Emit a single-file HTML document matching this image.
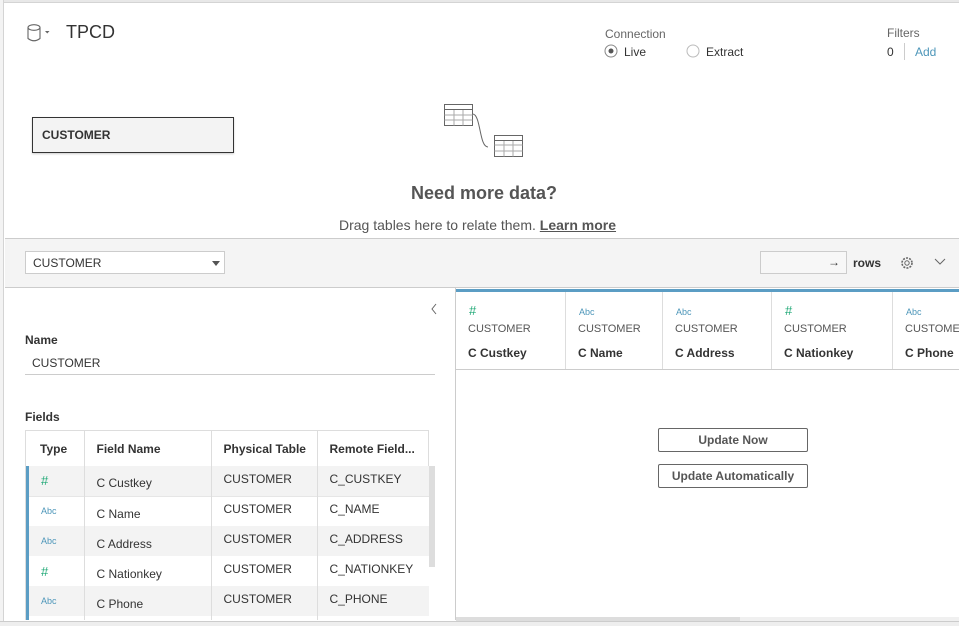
<!DOCTYPE html>
<html><head><meta charset="utf-8"><style>
*{margin:0;padding:0;box-sizing:border-box}
body{width:959px;height:626px;overflow:hidden;background:#fff;font-family:"Liberation Sans",sans-serif;color:#333;position:relative}
.a{position:absolute}
.t{font-size:12px}
.hash{color:#1fa876;font-size:13px}
.abc{color:#4d96b9;font-size:9px}
</style></head><body>
<div class="a" style="left:0;top:0;width:959px;height:3px;background:#e8e8e8;border-bottom:1px solid #d4d4d4"></div>
<div class="a" style="left:0;top:0;width:4px;height:626px;background:#f3f3f3;border-right:1px solid #d4d4d4"></div>

<svg class="a" style="left:26px;top:23px" width="28" height="20"><ellipse cx="8" cy="4.5" rx="6" ry="2.8" fill="none" stroke="#666" stroke-width="1.1"/><path d="M2 4.5V15.5Q8 20 14 15.5V4.5" fill="none" stroke="#666" stroke-width="1.1"/><path d="M19 8h4.5l-2.25 2.5z" fill="#666"/></svg>
<div class="a" style="left:66px;top:22px;font-size:18px;color:#333">TPCD</div>

<div class="a t" style="left:605px;top:27px;color:#666">Connection</div>
<svg class="a" style="left:604px;top:44px" width="14" height="14"><circle cx="7" cy="7" r="6" fill="#fff" stroke="#888"/><circle cx="7" cy="7" r="2.5" fill="#555"/></svg>
<div class="a t" style="left:624px;top:45px;color:#333">Live</div>
<svg class="a" style="left:686px;top:44px" width="14" height="14"><circle cx="7" cy="7" r="6" fill="#fff" stroke="#bbb"/></svg>
<div class="a t" style="left:706px;top:45px;color:#333">Extract</div>
<div class="a t" style="left:887px;top:26px;color:#666">Filters</div>
<div class="a t" style="left:887px;top:45px">0</div>
<div class="a" style="left:904px;top:43px;width:1px;height:17px;background:#ccc"></div>
<div class="a t" style="left:915px;top:45px;color:#4d96b9">Add</div>

<div class="a" style="left:32px;top:117px;width:202px;height:36px;background:#f3f3f3;border:1px solid #333;box-shadow:0 1px 2px rgba(0,0,0,.2);font-size:12px;font-weight:bold;padding:10px 9px">CUSTOMER</div>

<svg class="a" style="left:441px;top:102px" width="84" height="58" fill="none" stroke="#666"><rect x="3.5" y="2.5" width="28" height="21"/><path d="M3.5 7.5h28M3.5 13h28M3.5 18h28M13 7.5v16M22 7.5v16" stroke="#aaa"/><path d="M3.5 7.5h28" stroke="#666"/><path d="M31.5 12C40 12 38 45 47 45"/><rect x="53.5" y="33.5" width="28" height="21"/><path d="M53.5 43h28M53.5 49h28M63 38.5v16M72 38.5v16" stroke="#aaa"/><path d="M53.5 38.5h28"/></svg>
<div class="a" style="left:411px;top:183px;font-size:18px;font-weight:bold;color:#555">Need more data?</div>
<div class="a" style="left:339px;top:217px;font-size:14px;color:#555">Drag tables here to relate them. <b style="text-decoration:underline">Learn more</b></div>

<div class="a" style="left:5px;top:238px;width:954px;height:50px;background:#f4f4f4;border-top:1px solid #ccc;border-bottom:1px solid #ccc"></div>
<div class="a t" style="left:25px;top:251px;width:200px;height:23px;background:#fff;border:1px solid #ccc;padding:4px 7px">CUSTOMER</div>
<div class="a" style="left:212px;top:261px;border:4px solid transparent;border-top:5px solid #555;border-bottom:0"></div>
<div class="a" style="left:760px;top:251px;width:87px;height:23px;background:#f7f7f7;border:1px solid #ccc;text-align:right;padding:3px 6px;font-size:12px">→</div>
<div class="a t" style="left:853px;top:256px;font-weight:bold">rows</div>
<svg class="a" style="left:900px;top:256px" width="14" height="14" fill="none" stroke="#666"><circle cx="7" cy="7" r="2.2"/><circle cx="7" cy="7" r="5" stroke-dasharray="2 1.2" stroke-width="1.6"/></svg>
<svg class="a" style="left:934px;top:258px" width="12" height="8"><path d="M1 1l5 5 5-5" fill="none" stroke="#666"/></svg>

<div class="a" style="left:455px;top:288px;width:1px;height:332px;background:#ccc"></div>
<svg class="a" style="left:430px;top:303px" width="8" height="12"><path d="M6 1L2 6l4 5" fill="none" stroke="#666"/></svg>
<div class="a t" style="left:25px;top:333px;font-weight:bold">Name</div>
<div class="a t" style="left:32px;top:356px">CUSTOMER</div>
<div class="a" style="left:25px;top:374px;width:410px;height:1px;background:#ccc"></div>
<div class="a t" style="left:25px;top:410px;font-weight:bold">Fields</div>

<div class="a" style="left:25px;top:430px;width:404px;height:190px;border:1px solid #ddd;border-bottom:0;overflow:hidden">
<table style="border-collapse:collapse;font-size:12px;width:403px">
<colgroup><col style="width:58px"><col style="width:127px"><col style="width:106px"><col></colgroup>
<tr style="height:36px;font-weight:bold;background:#fff"><td style="padding-left:14px;border-right:1px solid #ddd">Type</td><td style="padding-left:12px;border-right:1px solid #ddd">Field Name</td><td style="padding-left:12px;border-right:1px solid #ddd">Physical Table</td><td style="padding-left:12px">Remote Field...</td></tr>
</table>
</div>
<div class="a" style="left:26px;top:466px;width:403px;height:154px;border-left:3px solid #5b9dc4;overflow:hidden">
<table style="border-collapse:collapse;font-size:12px;width:400px">
<colgroup><col style="width:55px"><col style="width:127px"><col style="width:106px"><col></colgroup>
<tr style="height:30px;background:#f3f3f3"><td style="padding-left:12px" class="hash">#</td><td style="padding:5px 12px 0;border-left:1px solid #ddd">C Custkey</td><td style="padding:0 12px 4px;border-left:1px solid #ddd">CUSTOMER</td><td style="padding:0 12px 4px;border-left:1px solid #ddd">C_CUSTKEY</td></tr>
<tr style="height:30px;background:#fff;border-top:1px solid #e6e6e6"><td style="padding-left:12px" class="abc">Abc</td><td style="padding:5px 12px 0;border-left:1px solid #ddd">C Name</td><td style="padding:0 12px 4px;border-left:1px solid #ddd">CUSTOMER</td><td style="padding:0 12px 4px;border-left:1px solid #ddd">C_NAME</td></tr>
<tr style="height:30px;background:#f3f3f3"><td style="padding-left:12px" class="abc">Abc</td><td style="padding:5px 12px 0;border-left:1px solid #ddd">C Address</td><td style="padding:0 12px 4px;border-left:1px solid #ddd">CUSTOMER</td><td style="padding:0 12px 4px;border-left:1px solid #ddd">C_ADDRESS</td></tr>
<tr style="height:30px;background:#fff"><td style="padding-left:12px" class="hash">#</td><td style="padding:5px 12px 0;border-left:1px solid #ddd">C Nationkey</td><td style="padding:0 12px 4px;border-left:1px solid #ddd">CUSTOMER</td><td style="padding:0 12px 4px;border-left:1px solid #ddd">C_NATIONKEY</td></tr>
<tr style="height:30px;background:#f3f3f3"><td style="padding-left:12px" class="abc">Abc</td><td style="padding:5px 12px 0;border-left:1px solid #ddd">C Phone</td><td style="padding:0 12px 4px;border-left:1px solid #ddd">CUSTOMER</td><td style="padding:0 12px 4px;border-left:1px solid #ddd">C_PHONE</td></tr>
<tr style="height:30px;background:#fff"><td></td><td style="border-left:1px solid #ddd"></td><td style="border-left:1px solid #ddd"></td><td style="border-left:1px solid #ddd"></td></tr>
</table>
</div>
<div class="a" style="left:429px;top:466px;width:6px;height:101px;background:#ddd"></div>

<div class="a" style="left:456px;top:289px;width:503px;height:3px;background:#5b9dc4"></div>
<div class="a" style="left:456px;top:369px;width:503px;height:1px;background:#ccc"></div>
<div class="a" style="left:565px;top:292px;width:1px;height:77px;background:#ddd"></div>
<div class="a" style="left:662px;top:292px;width:1px;height:77px;background:#ddd"></div>
<div class="a" style="left:771px;top:292px;width:1px;height:77px;background:#ddd"></div>
<div class="a" style="left:892px;top:292px;width:1px;height:77px;background:#ddd"></div>

<div class="a hash" style="left:469px;top:303px">#</div><div class="a" style="left:468px;top:323px;font-size:11px;color:#555">CUSTOMER</div><div class="a t" style="left:468px;top:346px;font-weight:bold">C Custkey</div>
<div class="a abc" style="left:579px;top:307px">Abc</div><div class="a" style="left:578px;top:323px;font-size:11px;color:#555">CUSTOMER</div><div class="a t" style="left:578px;top:346px;font-weight:bold">C Name</div>
<div class="a abc" style="left:676px;top:307px">Abc</div><div class="a" style="left:675px;top:323px;font-size:11px;color:#555">CUSTOMER</div><div class="a t" style="left:675px;top:346px;font-weight:bold">C Address</div>
<div class="a hash" style="left:785px;top:303px">#</div><div class="a" style="left:784px;top:323px;font-size:11px;color:#555">CUSTOMER</div><div class="a t" style="left:784px;top:346px;font-weight:bold">C Nationkey</div>
<div class="a abc" style="left:906px;top:307px">Abc</div><div class="a" style="left:905px;top:323px;font-size:11px;color:#555;white-space:nowrap">CUSTOMER</div><div class="a t" style="left:905px;top:346px;font-weight:bold">C Phone</div>

<div class="a" style="left:658px;top:428px;width:150px;height:24px;border:1px solid #666;border-radius:2px;text-align:center;font-size:12px;font-weight:bold;color:#555;line-height:22px">Update Now</div>
<div class="a" style="left:658px;top:464px;width:150px;height:24px;border:1px solid #666;border-radius:2px;text-align:center;font-size:12px;font-weight:bold;color:#555;line-height:22px">Update Automatically</div>

<div class="a" style="left:456px;top:617px;width:503px;height:4px;background:#f0f0f0"></div>
<div class="a" style="left:456px;top:617px;width:284px;height:4px;background:#ddd"></div>
<div class="a" style="left:0;top:621px;width:959px;height:5px;background:#eee;border-top:1px solid #ccc"></div>
</body></html>
